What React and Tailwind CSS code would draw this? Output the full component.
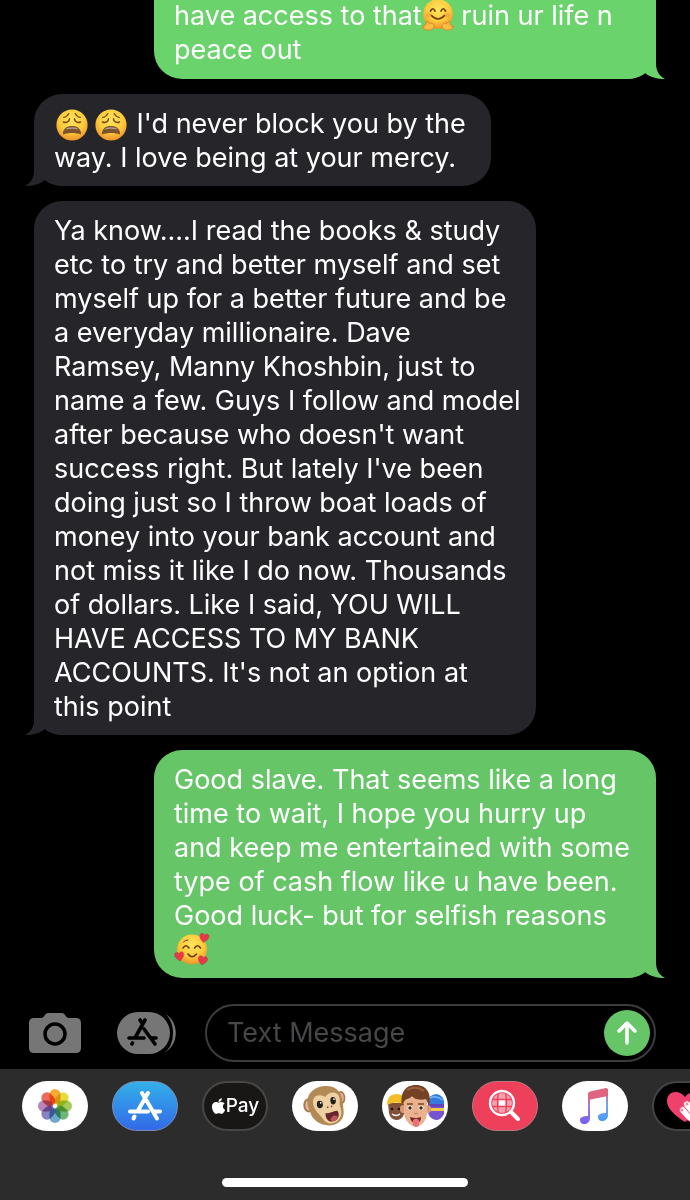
import React from 'react';
import { FaApple } from 'react-icons/fa';

function Tail({ side }) {
  const path = 'M9 0V12C9 20 6 25 0 28C8 28 15 26 20 22C25 26 31 28 40 28V0Z';
  return side === 'left' ? (
    <svg className="absolute bottom-0 -left-[9px] h-7 w-10 text-[#26252a]" viewBox="0 0 40 28" fill="currentColor" aria-hidden="true">
      <path d={path} />
    </svg>
  ) : (
    <svg className="absolute bottom-0 -right-[9px] h-7 w-10 -scale-x-100 text-inherit" viewBox="0 0 40 28" fill="currentColor" aria-hidden="true">
      <path d={path} />
    </svg>
  );
}

function FaceGradient({ id }) {
  return (
    <defs>
      <radialGradient id={id} cx="50%" cy="35%" r="65%">
        <stop offset="0" stopColor="#ffe45e" />
        <stop offset="0.6" stopColor="#fccb3b" />
        <stop offset="1" stopColor="#ee922a" />
      </radialGradient>
    </defs>
  );
}

function Weary({ id, className }) {
  return (
    <svg className={`inline-block h-8 w-8 align-[-8px] ${className}`} viewBox="0 0 32 32" role="img" aria-label="weary face">
      <FaceGradient id={id} />
      <circle cx="16" cy="16" r="15.6" fill={`url(#${id})`} />
      <g fill="none" stroke="#7a4717" strokeLinecap="round">
        <path d="M7.500 8.500C10 8 12 6.500 12.800 4.500M24.500 8.500C22 8 20 6.500 19.200 4.500" strokeWidth="1.200" />
        <path d="M7.500 13C10.500 14.500 13.500 12.500 13.500 9.800M24.500 13C21.500 14.500 18.500 12.500 18.500 9.800" strokeWidth="1.500" />
      </g>
      <path d="M7 25.500C6.500 19.500 11 17 16 17S25.500 19.500 25 25.500C19.500 23.500 12.500 23.500 7 25.500Z" fill="#7d5230" />
      <path d="M9 20.500C12 17.500 20 17.500 23 20.500C18 19.600 14 19.600 9 20.500Z" fill="#b3a08f" />
    </svg>
  );
}

function Hugging() {
  return (
    <svg className="inline-block h-8 w-8 align-[-6px]" viewBox="0 0 32 32" role="img" aria-label="hugging face">
      <FaceGradient id="hug" />
      <circle cx="16" cy="15" r="14.800" fill="url(#hug)" />
      <g fill="none" stroke="#6b3a12" strokeWidth="1.700" strokeLinecap="round">
        <path d="M8.500 12Q10.800 7.500 13 12M19 12Q21.200 7.500 23.500 12" />
        <path d="M9.500 16.500Q16 23.500 22.500 16.500" />
      </g>
      <circle cx="6.500" cy="16" r="2.500" fill="#f58a3c" opacity=".5" />
      <circle cx="25.500" cy="16" r="2.500" fill="#f58a3c" opacity=".5" />
      <path d="M4 22.500Q6 21.500 6.300 24L10.500 24.500Q13 26 11.500 29Q9 32 5 31Q0 30 .5 27.500L2 28Q1.500 25 4 25.500Z" fill="#f9bd42" stroke="#d97f24" strokeWidth=".8" />
      <path d="M28 22.500Q26 21.500 25.700 24L21.500 24.500Q19 26 20.500 29Q23 32 27 31Q32 30 31.500 27.500L30 28Q30.500 25 28 25.500Z" fill="#f9bd42" stroke="#d97f24" strokeWidth=".8" />
    </svg>
  );
}

function Hearts() {
  const heart = 'M0 4C-3 1.500-5-.5-4.500-3C-4-5.500-1-5.500 0-3C1-5.500 4-5.500 4.500-3C5-.5 3 1.500 0 4Z';
  return (
    <svg className="inline-block h-8 w-9 align-[-6px]" viewBox="0 0 36 32" role="img" aria-label="smiling face with hearts">
      <FaceGradient id="hearts" />
      <circle cx="18" cy="16.500" r="15" fill="url(#hearts)" />
      <g fill="none" stroke="#6b3a12" strokeWidth="1.600" strokeLinecap="round">
        <path d="M9 15Q12 10.500 15 15M20.500 15Q23.500 10.500 26.500 15" />
        <path d="M14 21Q18 26.500 22.500 21" />
        <path d="M9.500 9Q11.500 6.500 14 7" strokeWidth="1" />
      </g>
      <g fill="#e5394a" stroke="#c3273b" strokeWidth=".4">
        <path d={heart} transform="translate(30 5.500) rotate(10)" />
        <path d={heart} transform="translate(5.500 24) rotate(-8)" />
        <path d={heart} transform="translate(28.500 28) rotate(12)" />
      </g>
    </svg>
  );
}

function Bubble({ side, lines, className }) {
  return (
    <article className={`relative max-w-full rounded-[28px] px-5 ${className}`}>
      <Tail side={side} />
      <p className="relative text-[27px] leading-[34px] text-white">
        {lines.map((line, i) => (
          <span key={i} className="block h-[34px] whitespace-nowrap">{line}</span>
        ))}
      </p>
    </article>
  );
}

function StoreMark({ className }) {
  return (
    <svg className={className} viewBox="0 0 34 32" fill="none" stroke="currentColor" strokeWidth="4" strokeLinecap="round" aria-hidden="true">
      <path d="M14 3L17 8M20 3L10 20.500M18.500 10.500L29 28.500M2 21.500H20M27 21.500H32M6.500 26.500L5.500 28.500" />
    </svg>
  );
}

function CameraIcon() {
  return (
    <svg className="h-10 w-[52px]" viewBox="0 0 52 40" aria-hidden="true">
      <path d="M5 5H12C14 5 15 3.500 16 2C17 .5 18 0 20 0H32C34 0 35 .5 36 2C37 3.500 38 5 40 5H47Q52 5 52 10V35Q52 40 47 40H5Q0 40 0 35V10Q0 5 5 5Z" fill="#767676" />
      <circle cx="26" cy="21" r="10" fill="none" stroke="#000" strokeWidth="3.500" />
    </svg>
  );
}

function DrawerIcon() {
  return (
    <svg className="h-[42px] w-[60px]" viewBox="0 0 60 42" aria-hidden="true">
      <rect x="0" y="0" width="53" height="42" rx="21" fill="#767676" />
      <path d="M47 2C62 8 62 34 47 40C58 32 58 10 47 2Z" fill="#767676" stroke="#767676" />
      <path d="M45 1C58 9 58 33 45 41" fill="none" stroke="#000" strokeWidth="2.500" />
      <g fill="none" stroke="#000" strokeWidth="3.600" strokeLinecap="round">
        <path d="M23 8L25.500 12M28 8L18.500 25M27 17L38 32M12 26H27M34.500 26H39M15.500 31L15 32" />
      </g>
    </svg>
  );
}

const petals = ['#f6a21e', '#e3d927', '#9bc84a', '#5fae68', '#5f9fc8', '#7a78b8', '#b278b4', '#e9584b'];

function PhotosIcon() {
  return (
    <svg className="h-9 w-9" viewBox="-18 -18 36 36" aria-hidden="true">
      {petals.map((color, i) => (
        <rect key={color} x="-5.600" y="-17" width="11.200" height="15" rx="5.600" fill={color} opacity=".9" transform={`rotate(${i * 45})`} className="mix-blend-multiply" />
      ))}
      <circle r="1.500" fill="#fff" />
    </svg>
  );
}

function MonkeyIcon() {
  return (
    <svg className="h-11 w-11" viewBox="0 0 44 44" aria-hidden="true">
      <g transform="rotate(-5 22 22)">
        <ellipse cx="5.500" cy="20" rx="5" ry="7" fill="#a97b4c" />
        <ellipse cx="5.500" cy="20" rx="3" ry="5" fill="#eab4a4" />
        <ellipse cx="39" cy="15" rx="4" ry="6.500" fill="#a97b4c" />
        <ellipse cx="39" cy="15" rx="2.300" ry="4.500" fill="#eab4a4" />
        <path d="M5 21C3 9 12 2 23 2S40 9 40 19S42 37 31 41C20 44 9 37 7 28Z" fill="#b18a55" />
        <path d="M11 22C8 12 16 8 23 13C29 6 39 9 37 19C36 24 40 29 36 35C31 42 22 41 19 35C17 31 13 28 11 22Z" fill="#efd1a1" />
        <ellipse cx="17" cy="20" rx="3" ry="3.700" fill="#241d18" />
        <ellipse cx="30.500" cy="17.500" rx="2.700" ry="3.700" fill="#241d18" />
        <circle cx="18" cy="18.500" r=".9" fill="#fff" />
        <circle cx="31.500" cy="16" r=".9" fill="#fff" />
        <circle cx="24.500" cy="23.500" r=".9" fill="#77523b" />
        <circle cx="28.500" cy="23" r=".9" fill="#77523b" />
        <path d="M22 29C26 31 30 27 34 28C36 31 35 37 29 38C24 39 21 34 22 29Z" fill="#67262b" />
        <path d="M26 36Q30 30 34 34Q32 38 29 38Q27 38 26 36Z" fill="#bd565d" />
      </g>
    </svg>
  );
}

function MemojiIcon() {
  return (
    <svg className="h-[50px] w-[66px]" viewBox="0 0 66 50" aria-hidden="true">
      <path d="M6 22H22V33Q20 39 14 39Q8 38 7 32Z" fill="#805039" />
      <path d="M5 24Q5 13 15 13Q24 13 24 24Q14 19 5 24Z" fill="#f3bd25" />
      <g fill="#21160f"><circle cx="10" cy="28" r="1.300" /><circle cx="17" cy="28" r="1.300" /></g>
      <path d="M10 33Q14 36 18 33" fill="none" stroke="#fff" strokeWidth="1.500" />
      <path d="M46 22H62V33Q59 39 54 39Q48 38 46 32Z" fill="#7554cf" />
      <path d="M46 23Q46 13 55 13Q63 15 62 24Z" fill="#3479de" />
      <path d="M46 23H62V26H46Z" fill="#6242bd" />
      <path d="M46 27H62V30H46Z" fill="#f3c844" />
      <path d="M48 17Q54 14 61 19" fill="none" stroke="#6db5f1" strokeWidth="1.500" />
      <ellipse cx="21" cy="28" rx="3" ry="4" fill="#d99a78" />
      <ellipse cx="46" cy="28" rx="3" ry="4" fill="#d99a78" />
      <path d="M22 15H45V31C45 39 40 45 34 46C27 45 22 38 22 31Z" fill="#e9b18d" />
      <path d="M20 25C18 13 22 4 34 4C45 4 50 13 47 25L44 18C36 20 31 17 30 15C28 18 24 18 23 19Z" fill="#744325" />
      <path d="M25 9Q34 4 42 10" fill="none" stroke="#9b623c" strokeWidth="2" />
      <ellipse cx="28" cy="27" rx="2.500" ry="2.200" fill="#fff" />
      <ellipse cx="39" cy="27" rx="2.500" ry="2.200" fill="#fff" />
      <circle cx="28" cy="27" r="1.700" fill="#3a241b" />
      <circle cx="39" cy="27" r="1.700" fill="#3a241b" />
      <path d="M25 23H31M36 23H42" stroke="#754527" strokeWidth="1.300" />
      <path d="M32 32Q34 34 36 32" fill="none" stroke="#bf795c" />
      <path d="M28 36Q34 38 39 36Q39 42 34 42Q29 42 28 36Z" fill="#6c2529" />
      <path d="M31 39Q34 36 37 39V44Q34 48 31 44Z" fill="#e96f78" />
    </svg>
  );
}

function SearchGlobeIcon() {
  return (
    <svg className="h-9 w-9" viewBox="0 0 36 36" fill="none" stroke="#fff" aria-hidden="true">
      <circle cx="15" cy="15" r="10" fill="#fff" fillOpacity=".5" stroke="none" />
      <path d="M12 12H18V18H12Z" fill="#fff" stroke="none" />
      <path d="M4 11.500H26M4 18.500H26M11.500 4Q9.500 15 11.500 26M18.500 4Q20.500 15 18.500 26" stroke="#ef405b" strokeWidth="1.300" />
      <circle cx="15" cy="15" r="12" strokeWidth="2.400" />
      <path d="M24 24L31 31" strokeWidth="4" strokeLinecap="round" />
    </svg>
  );
}

function MusicIcon() {
  return (
    <svg className="h-9 w-[30px]" viewBox="0 0 30 36" aria-hidden="true">
      <defs>
        <linearGradient id="music" x1="0" y1="1" x2="0" y2="0">
          <stop offset="0" stopColor="#715cf3" />
          <stop offset=".55" stopColor="#a080df" />
          <stop offset="1" stopColor="#ed5875" />
        </linearGradient>
        <linearGradient id="music-right" x1="0" y1="1" x2="0" y2="0">
          <stop offset="0" stopColor="#469bf2" />
          <stop offset=".5" stopColor="#78a4ea" />
          <stop offset="1" stopColor="#d56b96" />
        </linearGradient>
      </defs>
      <path d="M8 5H10V30C10 34 7 36 4 36C1 36 0 34 0 32C0 29 3 28 8 28Z" fill="url(#music)" />
      <path d="M26 1H28V27C28 31 25 33 22 33C19 33 18 31 18 29C18 26 21 25 26 25Z" fill="url(#music-right)" />
      <path d="M8 6Q8 4 10 3.500L26 0Q28 0 28 2V8L8 12Z" fill="#df6580" />
    </svg>
  );
}

function HeartIcon() {
  return (
    <svg className="h-[50px] w-[66px] shrink-0" viewBox="0 0 66 50" aria-hidden="true">
      <path d="M33 41C22 34 15 27 15 20C15 10 27 8 33 16C39 8 51 10 51 20C51 27 43 34 33 41Z" fill="#ef416c" />
      <g fill="#fff" stroke="#ef416c" strokeWidth=".8">
        <rect x="30" y="25" width="7" height="17" rx="3.500" transform="rotate(-42 33 32)" />
        <rect x="35" y="19" width="7" height="20" rx="3.500" transform="rotate(-38 38 28)" />
      </g>
      <circle cx="30" cy="29" r="1.500" fill="#ef8aa3" />
      <circle cx="35" cy="23" r="1.500" fill="#ef8aa3" />
    </svg>
  );
}

const apps = [
  { label: 'Photos', style: 'bg-white', icon: <PhotosIcon /> },
  { label: 'App Store', style: 'border border-[#7a8db4] bg-linear-to-b from-[#35afe8] to-[#3468e8] text-white', icon: <StoreMark className="h-8 w-[34px]" /> },
  { label: 'Apple Pay', style: 'border-2 border-[#494745] bg-[#181716] text-white', icon: <><FaApple className="h-[18px] w-[15px]" aria-hidden="true" /><span className="text-[19px] leading-6 font-medium">Pay</span></> },
  { label: 'Animoji', style: 'bg-white', icon: <MonkeyIcon /> },
  { label: 'Memoji', style: 'bg-white', icon: <MemojiIcon /> },
  { label: 'Images', style: 'border border-[#b87883] bg-[#ef405b]', icon: <SearchGlobeIcon /> },
  { label: 'Music', style: 'bg-white', icon: <MusicIcon /> },
  { label: 'Digital Touch', style: 'border-2 border-[#444] bg-black', icon: <HeartIcon /> },
];

const longMessage = [
  'Ya know....I read the books & study',
  'etc to try and better myself and set',
  'myself up for a better future and be',
  'a everyday millionaire. Dave',
  'Ramsey, Manny Khoshbin, just to',
  'name a few. Guys I follow and model',
  "after because who doesn't want",
  "success right. But lately I've been",
  'doing just so I throw boat loads of',
  'money into your bank account and',
  'not miss it like I do now. Thousands',
  'of dollars. Like I said, YOU WILL',
  'HAVE ACCESS TO MY BANK',
  "ACCOUNTS. It's not an option at",
  'this point',
];

export default function App() {
  return (
    <div className="flex min-h-screen w-full flex-col overflow-hidden bg-black font-['Inter','Liberation_Sans',sans-serif]">
      <main className="flex flex-col items-start gap-[15px] px-[34px]">
        <Bubble side="right" className="-mt-px w-[502px] self-end rounded-t-none bg-[#6bd36b] pb-3 text-[#6bd36b]" lines={[<>have access to that<Hugging /> ruin ur life n</>, 'peace out']} />
        <Bubble
          side="left"
          className="w-[457px] bg-[#26252a] pt-[13px] pb-[11px]"
          lines={[<><Weary id="weary-a" className="mr-[7px] ml-0.5" /><Weary id="weary-b" className="mr-0.5" /> I'd never block you by the</>, 'way. I love being at your mercy.']}
        />
        <Bubble side="left" className="w-[502px] bg-[#26252a] pt-[13px] pb-[11px]" lines={longMessage} />
        <Bubble
          side="right"
          className="w-[502px] self-end bg-[#66c567] pt-[13px] pb-[11px] text-[#66c567]"
          lines={['Good slave. That seems like a long', 'time to wait, I hope you hurry up', 'and keep me entertained with some', 'type of cash flow like u have been.', 'Good luck- but for selfish reasons', <Hearts />]}
        />
      </main>

      <form className="mt-[26px] mb-[7px] flex items-center pr-[34px] pl-[29px]" onSubmit={(e) => e.preventDefault()}>
        <button type="button" aria-label="Camera" className="shrink-0"><CameraIcon /></button>
        <button type="button" aria-label="Apps" className="ml-9 shrink-0"><DrawerIcon /></button>
        <div className="ml-7 flex h-[58px] min-w-0 flex-1 items-center rounded-full border-2 border-[#3c3c3e] pr-1 pl-5">
          <input aria-label="Text Message" placeholder="Text Message" className="min-w-0 flex-1 bg-transparent text-[27px] leading-[34px] text-white outline-none placeholder:text-[#47474a]" />
          <button type="submit" aria-label="Send" className="flex size-[46px] shrink-0 items-center justify-center rounded-full bg-[#65c567]">
            <svg className="h-6 w-5" viewBox="0 0 20 24" fill="none" stroke="#fff" strokeWidth="3.500" strokeLinecap="round" strokeLinejoin="round" aria-hidden="true">
              <path d="M10 22V2M2 10L10 2L18 10" />
            </svg>
          </button>
        </div>
      </form>

      <footer className="flex flex-1 flex-col justify-between bg-[#2c2c2c] pt-3 pb-[13px]">
        <nav aria-label="Message apps" className="flex gap-6 overflow-hidden pl-[22px]">
          {apps.map((app) => (
            <button key={app.label} type="button" aria-label={app.label} className={`flex h-[50px] w-[66px] shrink-0 items-center justify-center overflow-hidden rounded-full ${app.style}`}>
              {app.icon}
            </button>
          ))}
        </nav>
        <div className="mx-auto h-[9px] w-[246px] rounded-full bg-white" />
      </footer>
    </div>
  );
}
